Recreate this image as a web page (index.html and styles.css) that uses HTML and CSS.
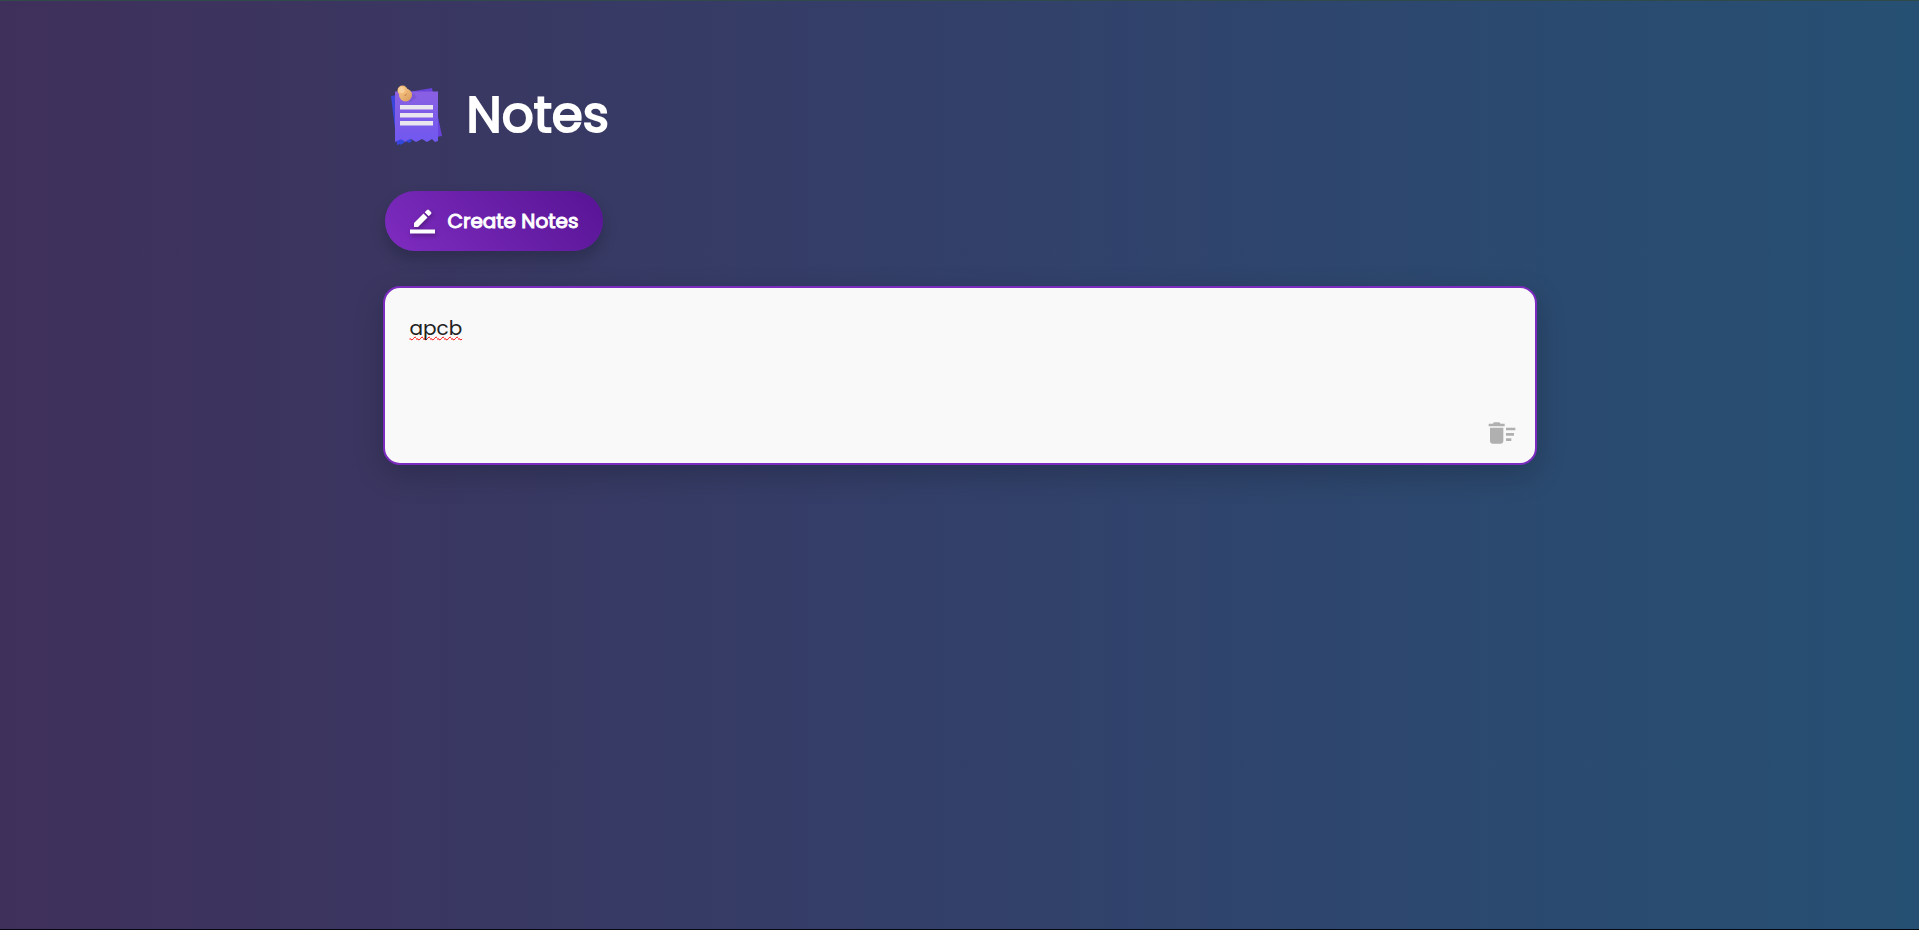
FILE: index.html
```html
<!DOCTYPE html>
<html lang="en">
<head>
<meta charset="utf-8">
<title>Notes</title>
<link rel="stylesheet" href="styles.css">
</head>
<body>
<main class="container">
  <h1 class="title">
    <svg class="logo" viewBox="0 0 60 60" aria-hidden="true">
      <defs>
        <linearGradient id="paper" x1="0" y1="0" x2="0" y2="1"><stop offset="0" stop-color="#8a60e2"/><stop offset="1" stop-color="#7158f0"/></linearGradient>
        <linearGradient id="pin" x1="0" y1="0" x2="1" y2="1"><stop offset="0" stop-color="#f6c88c"/><stop offset="1" stop-color="#d99a58"/></linearGradient>
      </defs>
      <path d="M6 11l6-1 10 46-4 0-3 3-3 1z" fill="#3a45dc"/>
      <path d="M12 9l35-6 10 48-6 1-36 3z" fill="#6a42dc"/>
      <path d="M10 6.500h43V56l-3 1-3-3-5 3-5-3-6 3-5-3-6 3-4-3-6 3z" fill="url(#paper)"/>
      <path d="M14 56l3-1.500 3 2.500-4.500 3zM21 56l4-2 2 2-3 2z" fill="#3448dc"/>
      <path d="M16 12l10 5 6-5-4-4z" fill="#5a3db8" opacity=".25"/>
      <path d="M15 20h33v4.500H15zM15 28h33v4.500H15zM15 36h33v4.500H15z" fill="#e9e6f0"/>
      <circle cx="20.500" cy="10" r="6.500" fill="url(#pin)"/>
      <path d="M17 9.500l4 1.500 1.500-5z" fill="#c98548"/>
      <circle cx="17.500" cy="5.500" r="5" fill="#f0b978"/>
      <circle cx="16.500" cy="5" r="3.200" fill="#f8cf98"/>
    </svg>
    Notes
  </h1>
  <button class="create" type="button">
    <svg class="pencil" viewBox="0 0 25 25" aria-hidden="true"><path d="M0 20.500h25v4H0zM4 14L13.500 4.500l4 4L8 18H4zM14.700 3.300L17 1q1-1 2 0l2 2q1 1 0 2l-2.300 2.300z"/></svg>
    Create Notes
  </button>
  <div class="note">
    <textarea class="note-text" aria-label="Note" spellcheck="false">apcb</textarea>
    <button class="delete" type="button" aria-label="Delete note">
      <svg class="trash" viewBox="0 0 24 24" aria-hidden="true"><path d="M15 16h4v2h-4zm0-8h7v2h-7zm0 4h6v2h-6zM3 18c0 1.100.9 2 2 2h6c1.100 0 2-.9 2-2V8H3zM14 5h-3l-1-1H6L5 5H2v2h12z"/></svg>
    </button>
  </div>
</main>
</body>
</html>
```
FILE: styles.css
```css
* { box-sizing: border-box; }
body {
  margin: 0;
  min-height: 100vh;
  padding: 79px 24px 0;
  border-top: 1px solid #30494b;
  border-bottom: 1px solid #05080f;
  background: linear-gradient(90deg, #3f305b, #333f69 48%, #265073);
  color: #fff;
  font-family: Poppins, Inter, "Open Sans", sans-serif;
  font-feature-settings: "cv11";
}
.container {
  max-width: 1150px;
  margin: 0 auto;
}
.title {
  display: flex;
  align-items: center;
  gap: 22px;
  margin: 0;
  font-size: 50px;
  line-height: 70px;
  font-weight: 400;
  -webkit-text-stroke: 2px #fff;
}
.logo { width: 60px; height: 60px; }
.create {
  display: flex;
  align-items: center;
  gap: 13px;
  height: 60px;
  margin: 41px 0 35px;
  padding: 0 25px;
  border: 0;
  border-radius: 40px;
  background: linear-gradient(45deg, #7e2cc0, #571494);
  box-shadow: 0 8px 15px rgba(0, 0, 0, 0.2);
  color: #fff;
  font: inherit;
  font-size: 20px;
  font-weight: 400;
  -webkit-text-stroke: 1px #fff;
  cursor: pointer;
}
.pencil {
  width: 25px;
  height: 25px;
  fill: #fff;
  filter: drop-shadow(1px 2px 2px rgba(0, 0, 0, 0.3));
}
.note {
  position: relative;
  margin: 0 -2px;
  border: 2px solid #7b2cbf;
  border-radius: 17px;
  background: #f9f9f9;
  box-shadow: 0 10px 30px rgba(0, 0, 0, 0.2);
}
.note-text {
  display: block;
  width: 100%;
  height: 175px;
  padding: 25px;
  border: 0;
  outline: 0;
  border-radius: 14px;
  background: transparent;
  color: #222;
  font: inherit;
  font-size: 20px;
  line-height: 30px;
  resize: none;
  text-decoration: underline wavy #f00 1px;
  text-decoration-skip-ink: none;
  text-underline-offset: 1px;
}
.delete {
  position: absolute;
  right: 17px;
  bottom: 14px;
  padding: 0;
  border: 0;
  background: none;
  cursor: pointer;
}
.trash { display: block; width: 32px; height: 32px; fill: #b0b0b0; }
```
